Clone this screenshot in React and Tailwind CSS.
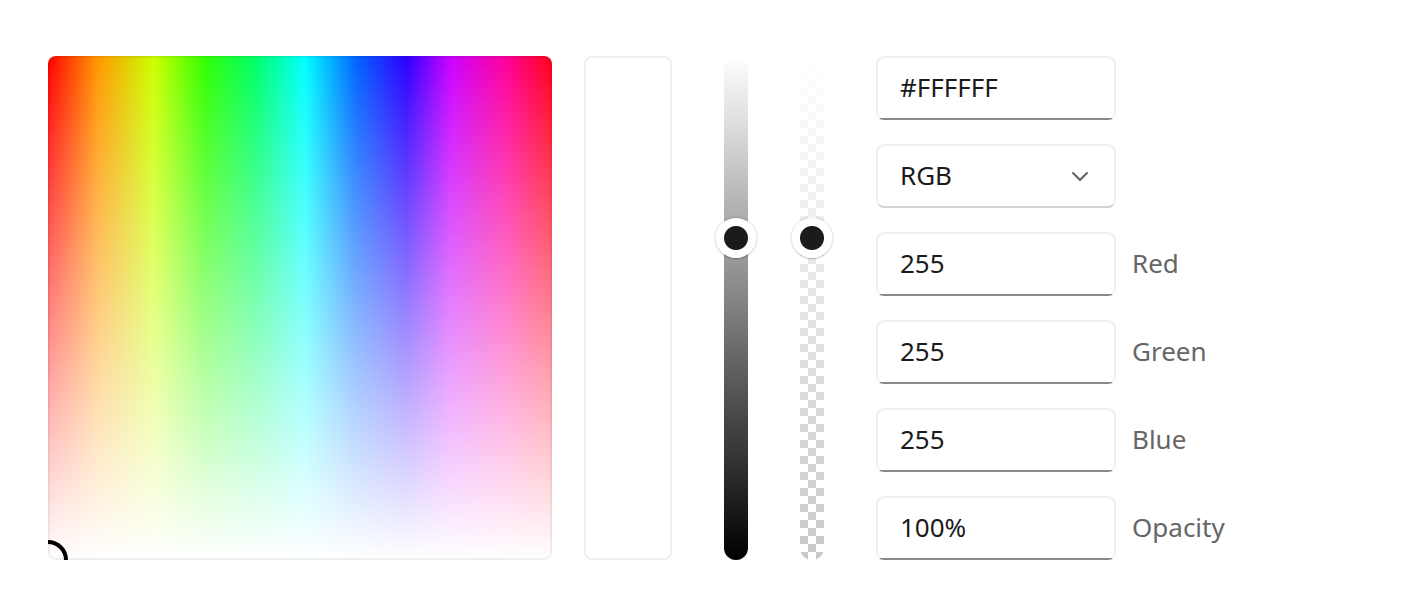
import { useState } from 'react';

const channels = [
    { id: 'red', label: 'Red', initial: '255' },
    { id: 'green', label: 'Green', initial: '255' },
    { id: 'blue', label: 'Blue', initial: '255' },
    { id: 'opacity', label: 'Opacity', initial: '100%' },
];

const fieldBase = 'h-16 w-60 rounded-lg border-2 px-[22px] pb-[2px] text-[26px] text-[#1b1b1b] outline-none';

const TextField = ({ id, label, initial, hideLabel }) => {
    const [value, setValue] = useState(initial);

    return (
        <div className="flex items-center gap-4">
            <input
                id={id}
                type="text"
                aria-label={hideLabel ? label : undefined}
                value={value}
                onChange={(e) => setValue(e.target.value)}
                className={`${fieldBase} border-[#f0f0f0] border-b-transparent bg-[linear-gradient(#8a8a8a,#8a8a8a)] bg-[length:100%_2px] bg-bottom bg-no-repeat bg-origin-border`}
            />
            {!hideLabel && (
                <label htmlFor={id} className="pb-[2px] text-[26px] text-[#666666]">
                    {label}
                </label>
            )}
        </div>
    );
};

const ModeSelect = () => (
    <div className="relative w-60">
        <select
            aria-label="Color model"
            defaultValue="RGB"
            className={`${fieldBase} appearance-none border-[#f0f0f0] border-b-[#d3d3d3] bg-white`}
        >
            <option>RGB</option>
            <option>HSV</option>
        </select>
        <svg
            viewBox="0 0 24 24"
            fill="none"
            stroke="#616161"
            strokeWidth="2"
            strokeLinecap="round"
            strokeLinejoin="round"
            className="pointer-events-none absolute top-5 right-6 h-6 w-6"
        >
            <path d="M5 9l7 7 7-7" />
        </svg>
    </div>
);

const VerticalSlider = ({ label, trackClass }) => {
    const [value, setValue] = useState(349);

    return (
        <div className={`relative w-6 rounded-full ${trackClass}`}>
            <input
                type="range"
                min="0"
                max="1000"
                aria-label={label}
                value={value}
                onChange={(e) => setValue(Number(e.target.value))}
                className="absolute inset-y-0 -left-2 h-full w-10 appearance-none bg-transparent [writing-mode:vertical-lr] [&::-webkit-slider-thumb]:h-10 [&::-webkit-slider-thumb]:w-10 [&::-webkit-slider-thumb]:appearance-none [&::-webkit-slider-thumb]:rounded-full [&::-webkit-slider-thumb]:bg-[radial-gradient(circle,#1b1b1b_11.5px,#ffffff_12.5px)] [&::-webkit-slider-thumb]:shadow-[0_0_0_2px_rgba(0,0,0,0.06),0_1px_1px_0_rgba(0,0,0,0.16)]"
            />
        </div>
    );
};

// Hue runs left to right, saturation fades to white towards the bottom
const Spectrum = () => (
    <div className="relative h-[504px] w-[504px] shrink-0 overflow-hidden rounded-lg bg-[linear-gradient(to_bottom,rgba(255,255,255,0),#ffffff),linear-gradient(to_right,#ff0000_0%,#ff9900_10%,#ccff00_21%,#33ff00_31%,#00ff66_41%,#00ffff_51%,#0066ff_61%,#2b00ff_71%,#cc00ff_80%,#ff0099_91%,#ff0019_100%)]">
        <div className="absolute inset-0 rounded-lg border-2 border-black/6" />
        <div className="absolute -bottom-5 -left-5 h-10 w-10 rounded-full border-4 border-black" />
    </div>
);

export default function App() {
    return (
        <main className="flex px-12 py-14 font-['Noto_Sans',sans-serif]">
            <Spectrum />
            <div className="ml-8 w-22 shrink-0 rounded-lg border-2 border-[#f0f0f0] bg-white" />
            <div className="ml-13 flex gap-13">
                <VerticalSlider label="Value" trackClass="bg-[linear-gradient(to_bottom,#ffffff,#000000)]" />
                <VerticalSlider
                    label="Opacity level"
                    trackClass="bg-[linear-gradient(to_bottom,#ffffff,rgba(255,255,255,0)),conic-gradient(#ffffff_25%,#c9c9c9_0_50%,#ffffff_0_75%,#c9c9c9_0)] bg-[length:100%_100%,16px_16px]"
                />
                <div className="flex flex-col gap-6">
                    <TextField id="hex" label="Hex" initial="#FFFFFF" hideLabel />
                    <ModeSelect />
                    {channels.map((channel) => (
                        <TextField key={channel.id} {...channel} />
                    ))}
                </div>
            </div>
        </main>
    );
}
